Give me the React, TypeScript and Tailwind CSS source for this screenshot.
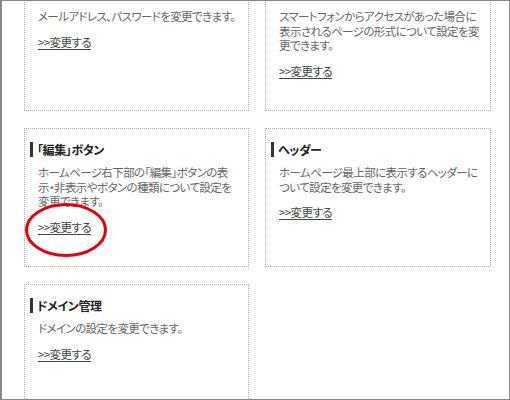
import React from "react";

type Card = { title: string; lines: string[] };

const cards: (Card | null)[] = [
  { title: "パスワード", lines: ["メールアドレス、パスワードを変更できます。"] },
  {
    title: "スマートフォン",
    lines: ["スマートフォンからアクセスがあった場合に", "表示されるページの形式について設定を変", "更できます。"],
  },
  {
    title: "「編集」ボタン",
    lines: ["ホームページ右下部の「編集」ボタンの表", "示・非表示やボタンの種類について設定を", "変更できます。"],
  },
  { title: "ヘッダー", lines: ["ホームページ最上部に表示するヘッダーに", "ついて設定を変更できます。"] },
  { title: "ドメイン管理", lines: ["ドメインの設定を変更できます。"] },
  null,
];

function CardBox({ card }: { card: Card }) {
  return (
    <div className="h-[139px] border border-dotted border-[#b3b396] pt-[13px] pl-[5px]">
      <div className="flex items-center h-[15px] gap-[4px]">
        <div className="w-[3px] h-[15px] bg-[#333]" />
        <div className="text-[12px] font-bold text-[#222] leading-[15px] whitespace-nowrap tracking-[-0.4px] [font-feature-settings:'palt']">
          {card.title}
        </div>
      </div>
      <div className="pl-[8px] mt-[8px] text-[11.5px] leading-[14.5px] tracking-[-0.6px] text-[#666] [font-feature-settings:'palt']">
        {card.lines.map((l, i) => (
          <div key={i} className="whitespace-nowrap">
            {l}
          </div>
        ))}
        <div className="mt-[11px]">
          <span className="underline text-[#444] underline-offset-2">&gt;&gt;変更する</span>
        </div>
      </div>
    </div>
  );
}

export default function App() {
  return (
    <div
      className="relative w-[510px] h-[400px] overflow-hidden bg-white border border-[#888] border-l-2"
      style={{ fontFamily: '"Noto Sans CJK JP", "Noto Sans", sans-serif' }}
    >
      <div className="grid grid-cols-[225px_226px] gap-x-[16px] gap-y-[17px] pl-[22px] mt-[-29px]">
        {cards.map((c, i) => (c ? <CardBox key={i} card={c} /> : <div key={i} />))}
      </div>
      <svg className="absolute left-[23px] top-[201px]" width="84" height="56" viewBox="0 0 84 56">
        <ellipse cx="41" cy="28" rx="39.5" ry="25.5" fill="none" stroke="#e60012" strokeWidth="3" />
      </svg>
    </div>
  );
}
